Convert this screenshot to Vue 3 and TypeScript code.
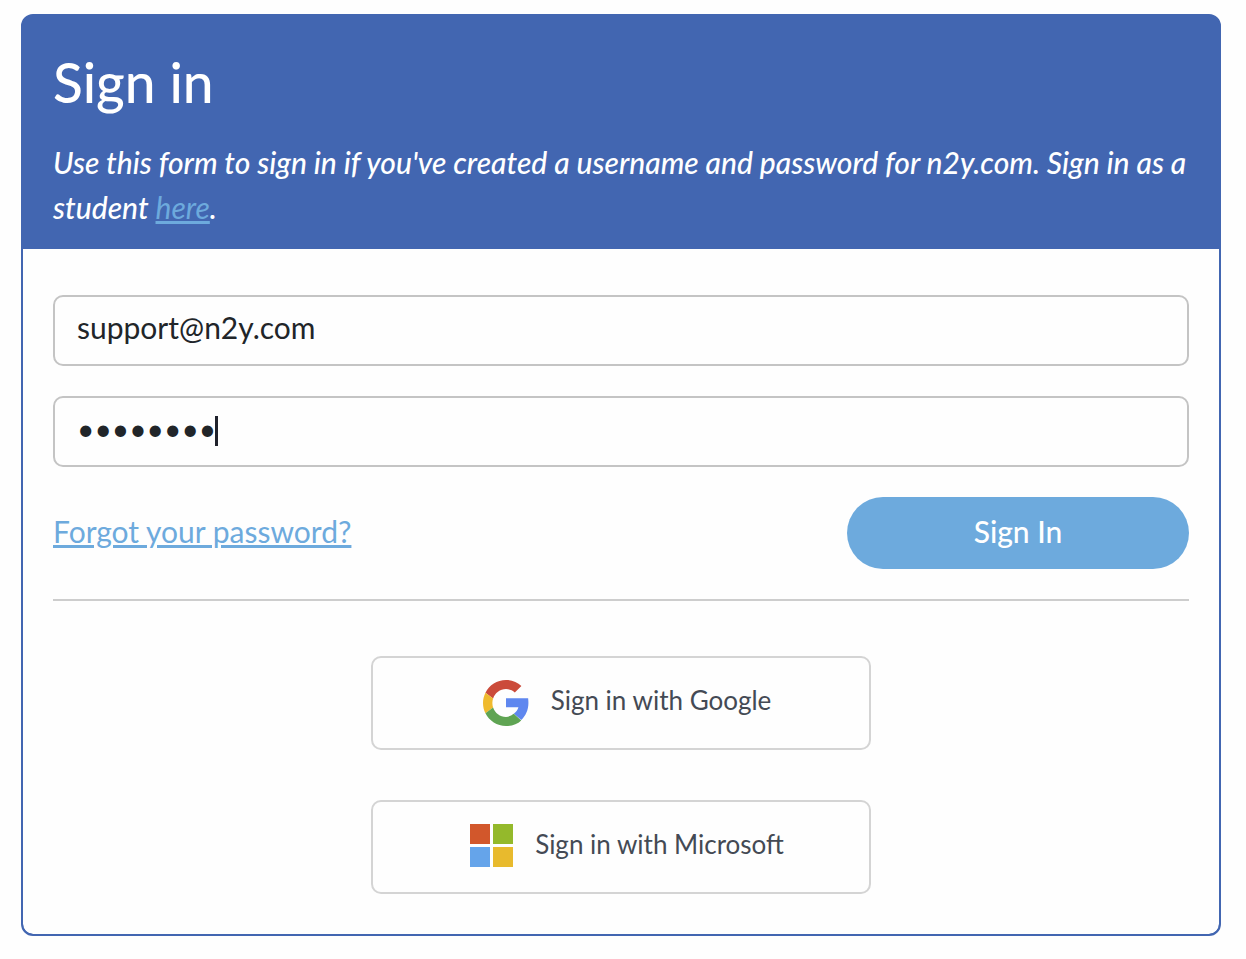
<script setup lang="ts">
import { ref } from 'vue'

const email = ref('support@n2y.com')
const password = ref('password')
</script>

<template>
  <main class="card">
    <header class="head">
      <h1>Sign in</h1>
      <p>
        Use this form to sign in if you've created a username and password for n2y.com. Sign in as a
        student <a href="#student">here</a>.
      </p>
    </header>
    <div class="body">
      <form @submit.prevent>
        <div class="field">
          <input v-model="email" type="email" aria-label="Username or email" autocomplete="username" />
        </div>
        <div class="field">
          <input v-model="password" type="password" aria-label="Password" autocomplete="current-password" />
          <span class="caret" aria-hidden="true"></span>
        </div>
        <div class="actions">
          <a href="#forgot">Forgot your password?</a>
          <button type="submit" class="primary">Sign In</button>
        </div>
      </form>
      <hr />
      <div class="social">
        <button type="button">
          <svg class="google" viewBox="0 0 48 48" aria-hidden="true">
            <path fill="#cb4b3a" d="M24 9.5c3.54 0 6.71 1.22 9.21 3.6l6.85-6.85C35.9 2.38 30.47 0 24 0 14.62 0 6.51 5.38 2.56 13.22l7.98 6.19C12.43 13.72 17.74 9.5 24 9.5z" />
            <path fill="#5f87ef" d="M47.4 24c0-1.57-.1-3.09-.3-5H24v9.5h12.94c-.58 2.5-2.26 5.03-4.78 6.73l7.73 6.5C44.4 37.5 47.4 31.3 47.4 24z" />
            <path fill="#efba2e" d="M10.53 28.59c-.48-1.45-.76-2.99-.76-4.59s.27-3.14.76-4.59l-7.98-6.19C.92 16.46 0 20.12 0 24c0 3.88.92 7.54 2.56 10.78l7.97-6.19z" />
            <path fill="#5fa453" d="M24 48c6.48 0 11.93-2.13 15.89-5.81l-7.73-6.96c-2.15 1.45-4.92 3.26-8.16 3.26-6.26 0-11.57-4.22-13.47-9.91l-7.98 6.19C6.51 42.62 14.62 48 24 48z" />
          </svg>
          <span>Sign in with Google</span>
        </button>
        <button type="button">
          <svg class="microsoft" viewBox="0 0 43 43" aria-hidden="true">
            <path fill="#d2572b" d="M0 0h20v20H0z" />
            <path fill="#94b92b" d="M23 0h20v20H23z" />
            <path fill="#65a4ea" d="M0 23h20v20H0z" />
            <path fill="#e8ba2d" d="M23 23h20v20H23z" />
          </svg>
          <span>Sign in with Microsoft</span>
        </button>
      </div>
    </div>
  </main>
</template>

<style>
body {
  margin: 0;
  background: #fefefe;
}
</style>

<style scoped>
.card {
  margin: 14px 25px 22px 21px;
  border: 2px solid #4266b1;
  border-radius: 12px;
  overflow: hidden;
  background: #4266b1;
  color: #212529;
  font-family: Lato, "Liberation Sans", sans-serif;
  font-size: 30px;
  line-height: 44px;
}
.head {
  padding: 32px 30px 19px;
  color: #fff;
}
h1 {
  margin: 0 0 24px;
  font-size: 55px;
  line-height: 68px;
  font-weight: 500;
}
p {
  margin: 0;
  font-style: italic;
  font-weight: 500;
  line-height: 45px;
}
a {
  color: #6daadd;
  font-weight: 400;
  text-decoration-thickness: 3px;
  text-underline-offset: 2px;
}
.body {
  padding: 46px 30px 40px;
  border-radius: 0 0 10px 10px;
  background: #fefefe;
}
form {
  display: flex;
  flex-direction: column;
  gap: 30px;
}
.field {
  position: relative;
}
input {
  display: block;
  box-sizing: border-box;
  width: 100%;
  height: 71px;
  padding: 0 22px 7px;
  border: 2px solid #c4c4c4;
  border-radius: 10px;
  background: #fefefe;
  color: #212529;
  font: inherit;
  outline: none;
}
.caret {
  position: absolute;
  top: 20px;
  left: 162px;
  width: 3px;
  height: 30px;
  background: #20222c;
}
.actions {
  display: flex;
  justify-content: space-between;
  align-items: center;
}
.actions a {
  padding-bottom: 4px;
}
button {
  font: inherit;
  cursor: pointer;
}
.primary {
  width: 342px;
  height: 72px;
  padding: 0 0 4px;
  border: 0;
  border-radius: 36px;
  background: #6daadd;
  color: #fff;
  font-weight: 500;
}
hr {
  height: 2px;
  margin: 30px 0 55px;
  border: 0;
  background: #cdcdcd;
}
.social {
  display: flex;
  flex-direction: column;
  align-items: center;
  gap: 50px;
}
.social button {
  display: flex;
  align-items: center;
  justify-content: center;
  gap: 22px;
  box-sizing: border-box;
  width: 500px;
  max-width: 100%;
  height: 94px;
  padding: 0 0 0 12px;
  border: 2px solid #d4d4d4;
  border-radius: 10px;
  background: #fefefe;
  color: #444a54;
  font-size: 26px;
}
.social span {
  padding-bottom: 6px;
}
.google {
  width: 46px;
  height: 46px;
}
.microsoft {
  width: 43px;
  height: 43px;
  padding-bottom: 3px;
}
</style>
